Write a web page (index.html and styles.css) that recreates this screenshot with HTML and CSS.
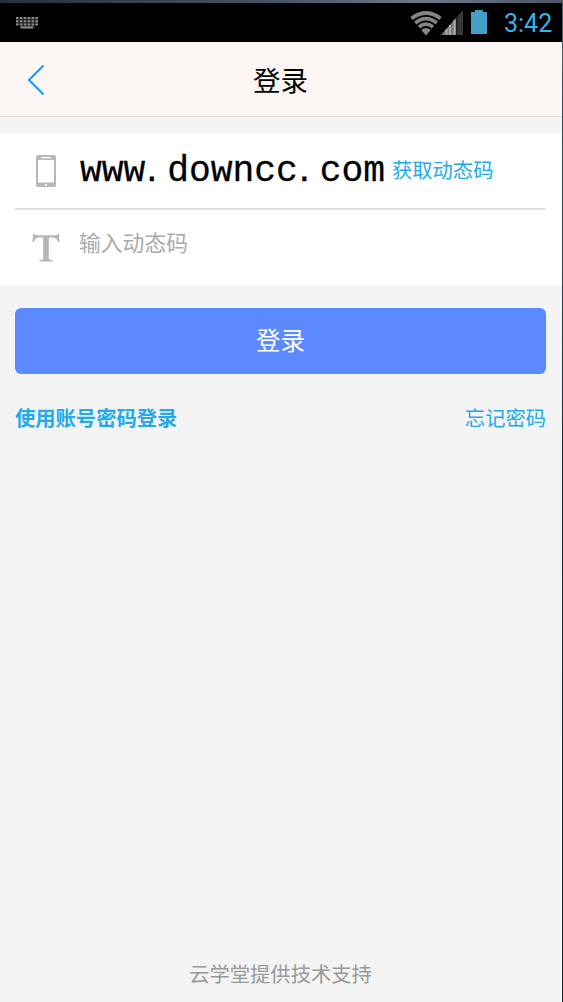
FILE: index.html
```
<!DOCTYPE html>
<html lang="zh-CN">
<head>
<meta charset="utf-8">
<title>登录</title>
<link rel="stylesheet" href="styles.css">
</head>
<body>
<div class="desktop">
<div class="screen">
  <div class="status">
    <svg class="keyboard" width="24" height="14" viewBox="0 0 24 14" stroke="#8b8b8b" fill="none">
      <path d="M1 1H23V9H20V13H5V9H1Z" fill="#202020" stroke="none"/>
      <path d="M1 2H23M1 5.2H23M1 8.4H23" stroke-width="2" stroke-dasharray="2.5 1.4"/>
      <path d="M5.5 11.4H18" stroke-width="2"/>
    </svg>
    <div class="indicators">
      <svg class="wifi" width="32" height="26" viewBox="0 0 32 26" fill="none" stroke="#858585" stroke-width="3.7">
        <path d="M1.5 8.5Q16 -2.500 30.5 8.5M5.200 13Q16 4.200 26.800 13M9 17Q16 11.200 23 17"/>
        <path d="M11.2 20Q16 16 20.8 20L16 25.500Z" fill="#858585" stroke="none"/>
      </svg>
      <svg class="signal" width="22" height="26" viewBox="0 0 22 26">
        <path d="M0 25L22 0V25Z" fill="#383838"/>
        <path d="M0 25L15 8V25Z" fill="#777"/>
        <path d="M5.5 25V19M9 25V15M13.5 25V10" stroke="#aaa" stroke-width="2"/>
        <path d="M16 25V7" stroke="#111" stroke-width="1"/>
      </svg>
      <svg class="battery" width="18" height="26" viewBox="0 0 18 26"><path d="M1 3H5V1H13V3H17V25H1Z" fill="#429fc8"/></svg>
      <span class="time">3:42</span>
    </div>
  </div>
  <header class="header">
    <svg class="back" width="20" height="34" viewBox="0 0 20 34"><path d="M17.5 2.5L3 17L17.5 31.5" fill="none" stroke="#129cff" stroke-width="2"/></svg>
    <h1 class="title">登录</h1>
  </header>
  <div class="form">
    <div class="row row-phone">
      <svg class="icon" width="32" height="36" viewBox="0 0 32 36">
        <path fill="#b7b7b7" fill-rule="evenodd" d="M8 2H24Q26 2 26 4V32Q26 34 24 34H8Q6 34 6 32V4Q6 2 8 2ZM8 7V29.5H24V7ZM11 4V5.2H21V4ZM15.2 31V33H16.8V31Z"/>
      </svg>
      <span class="phone">www<span class="dot">.</span>downcc<span class="dot">.</span>com</span>
      <span class="get-code">获取动态码</span>
    </div>
    <div class="row row-code">
      <svg class="icon" width="32" height="36" viewBox="0 0 32 36">
        <path fill="#b7b7b7" d="M4 4Q5.500 5.500 8 5.200H24Q26.500 5.500 28 4H29L29.500 12H28Q27 7.500 22.500 7.500H18.800V28Q18.800 30 22.500 30V31.500H9.500V30Q13.200 30 13.200 28V7.500H9.500Q5 7.500 4 12H2.500L3 4Z"/>
      </svg>
      <span class="placeholder">输入动态码</span>
    </div>
  </div>
  <div class="button">登录</div>
  <div class="links"><span class="account">使用账号密码登录</span><span>忘记密码</span></div>
  <footer class="footer">云学堂提供技术支持</footer>
</div>
</div>
</body>
</html>
```
FILE: styles.css
```
* { box-sizing: border-box; }
body {
  margin: 0;
  font-family: "Noto Sans CJK SC", sans-serif;
}
.desktop {
  height: 1002px;
  padding: 3px 1px 0 0;
  background: linear-gradient(90deg, #24313c, #465765 50%, #6e7888 75%, #4c5565) top / 100% 3px no-repeat, linear-gradient(#59636f 0, #334454 130px, #2c3f55 280px, #17232e 440px, #17202b);
}
.screen {
  height: 999px;
  display: flex;
  flex-direction: column;
  background: #f4f4f4;
}
.status {
  height: 39px;
  flex: none;
  display: flex;
  justify-content: space-between;
  background: #000;
}
.keyboard { margin: 13px 0 0 15px; filter: blur(.35px); }
.indicators { display: flex; padding: 7px 10px 0 0; }
.wifi { margin-right: -1px; }
.battery { margin: -1px 0 0 7px; }
.time {
  width: 48px;
  margin-left: 16px;
  font: 25px/27px Roboto, sans-serif;
  color: #35b5e5;
  white-space: nowrap;
}
.header {
  height: 75px;
  flex: none;
  display: grid;
  grid-template-columns: 50px 1fr 50px;
  align-items: center;
  background: #fbf6f3;
  border-bottom: 1px solid #dedad8;
}
.back { margin: 1px 0 0 26px; }
.title {
  margin: 0 1px 1px 0;
  font-size: 27.5px;
  line-height: 40px;
  font-weight: 400;
  text-align: center;
  color: #000;
}
.form {
  height: 152px;
  flex: none;
  margin-top: 16px;
  padding: 0 16px 0 15px;
  background: #fff;
}
.row { height: 75px; display: flex; align-items: center; }
.row-phone { height: 77px; border-bottom: 2px solid #e2e2e2; }
.icon { flex: none; margin-left: 15px; }
.phone {
  width: 306px;
  margin: 3px 0 0 18px;
  font: 36.3px/50px "Liberation Mono", monospace;
  color: #000;
  -webkit-text-stroke: .3px #000;
  white-space: nowrap;
}
.dot {
  display: inline-block;
  width: 21.8px;
  padding-left: 1px;
  font: 40px/30px "Liberation Sans", sans-serif;
}
.get-code {
  margin: -4px 0 0 6px;
  font-size: 20.3px;
  line-height: 30px;
  color: #22aaeb;
  white-space: nowrap;
}
.placeholder {
  margin: -11px 0 0 17px;
  font-size: 21.8px;
  line-height: 32px;
  color: #aaa;
}
.button {
  height: 66px;
  flex: none;
  margin: 23px 16px 0 15px;
  border-radius: 6px;
  background: #5b8aff;
  color: #fff;
  font-size: 24.5px;
  line-height: 64px;
  text-align: center;
}
.links {
  display: flex;
  justify-content: space-between;
  margin: 28px 16px 0 15px;
  font-size: 20.3px;
  line-height: 30px;
  color: #22aaeb;
}
.account { font-weight: 700; }
.footer {
  margin: auto 1px 0 0;
  padding-bottom: 14px;
  font-size: 20.3px;
  line-height: 30px;
  text-align: center;
  color: #999;
}
```
